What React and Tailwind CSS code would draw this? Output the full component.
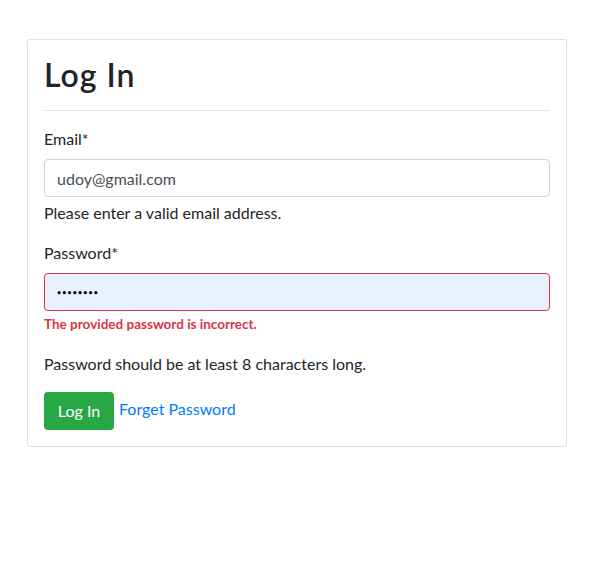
import React from 'react';

export default function App() {
  return (
    <div className="min-h-[566px] bg-white pt-[39px] pl-[27px] pr-[46px] font-['Lato',sans-serif] text-[#212529]">
      <div className="border border-black/[0.125] rounded-[3px] p-4 w-[540px]">
        <h2 className="text-[32px] leading-[38.4px] font-semibold tracking-[1px] mb-2">Log In</h2>
        <hr className="border-0 border-t border-black/10 my-4" />

        <div className="mb-4">
          <label className="block text-base leading-6 mb-2">Email*</label>
          <input
            type="text"
            readOnly
            value="udoy@gmail.com"
            className="block w-full h-[38px] px-3 text-base text-[#495057] bg-white border border-[#ced4da] rounded outline-none"
          />
          <p className="mt-1 text-base leading-6">Please enter a valid email address.</p>
        </div>

        <div>
          <label className="block text-base leading-6 mb-2">Password*</label>
          <input
            type="text"
            readOnly
            value="••••••••"
            className="block w-full h-[38px] px-3 text-[7px] font-bold tracking-[1.2px] text-black bg-[#e8f0fe] border border-[#dc3545] rounded outline-none"
          />
          <p className="mt-1 text-[13.5px] leading-[19.2px] font-bold text-[#dc3545]">The provided password is incorrect.</p>
          <p className="mt-[17px] text-base leading-6">Password should be at least 8 characters long.</p>
        </div>

        <div className="mt-4 flex items-center gap-[5px]">
          <button className="h-[38px] w-[70px] rounded bg-[#28a745] text-white text-base">Log In</button>
          <a href="#" className="text-base text-[#007bff] leading-6 -mt-[3px]">Forget Password</a>
        </div>
      </div>
    </div>
  );
}
